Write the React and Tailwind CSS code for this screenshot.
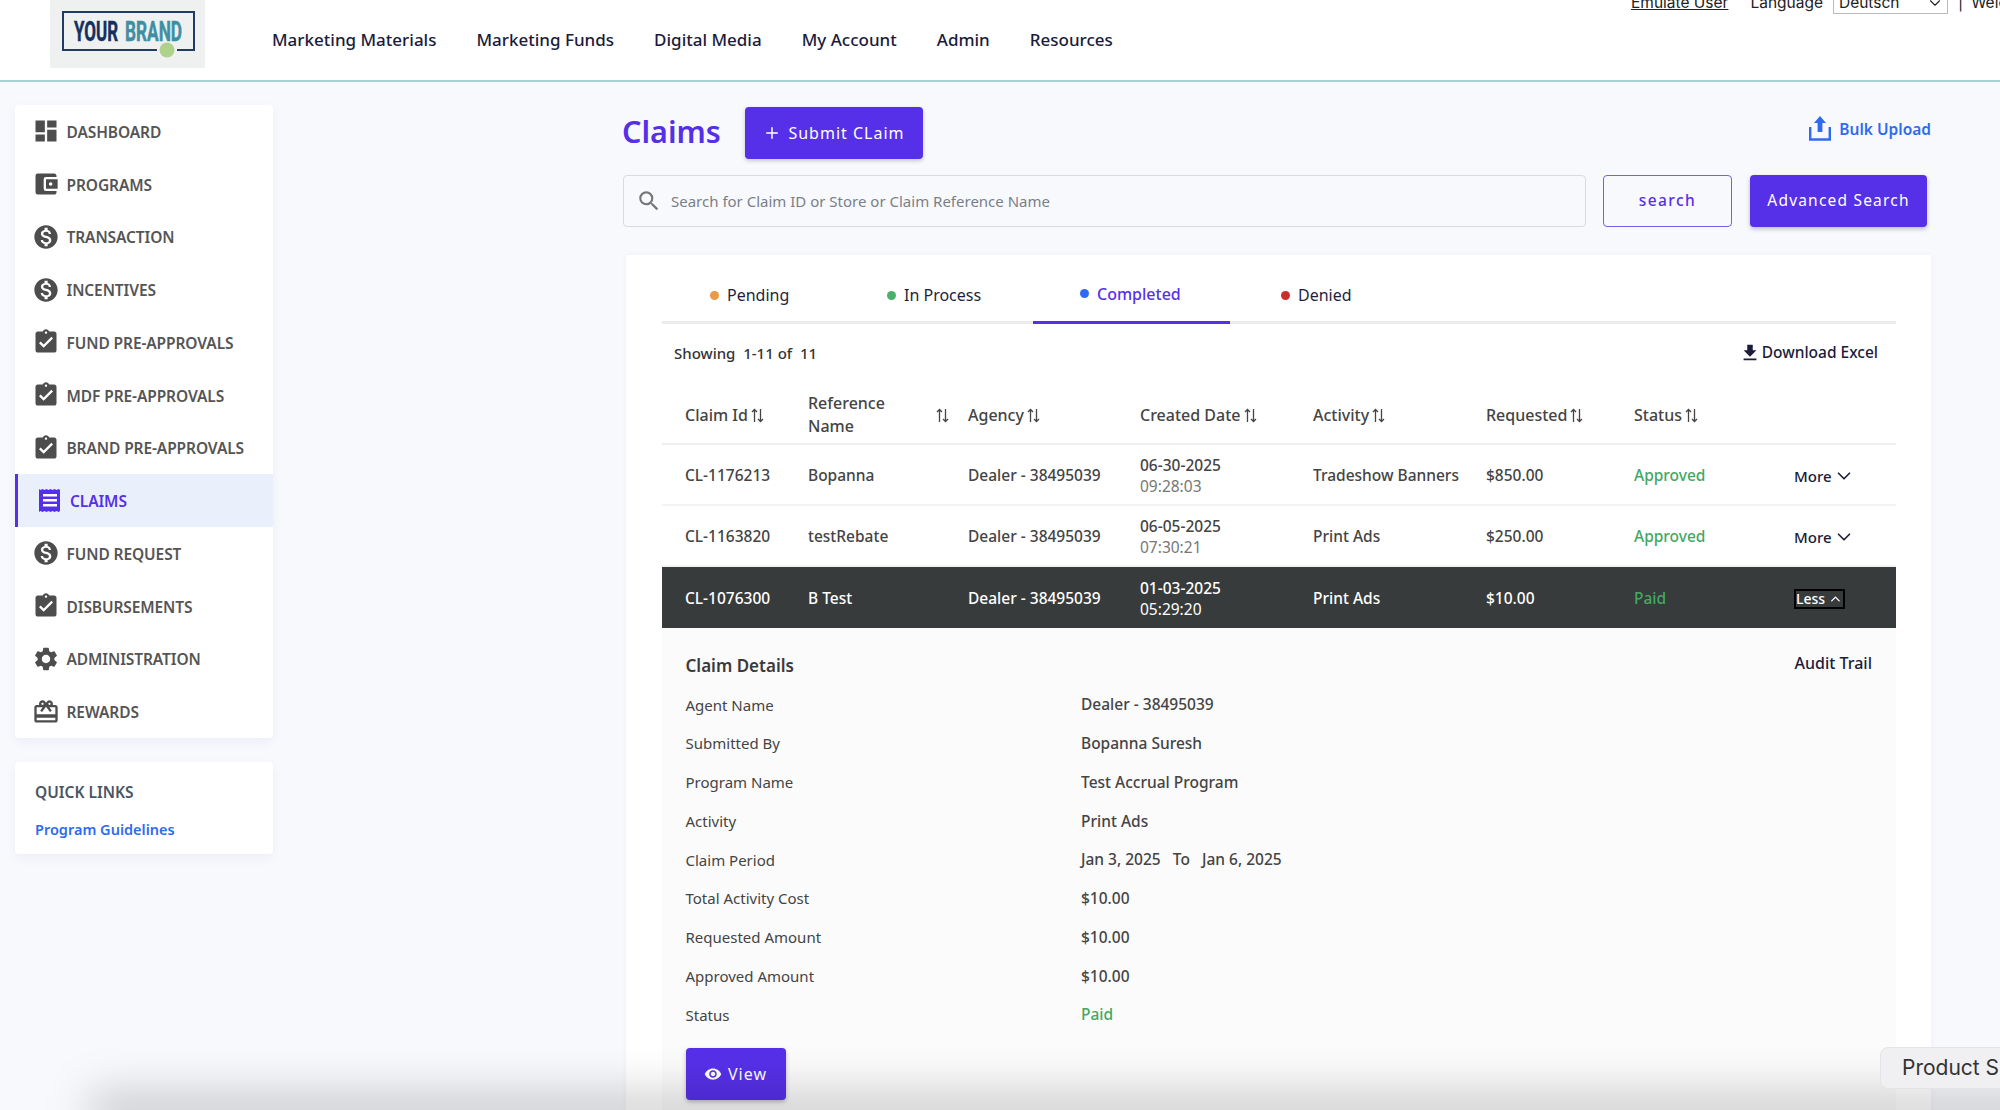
import React from "react";
import { ChevronDown, ChevronUp, Plus } from "lucide-react";
import {
  MdDashboard, MdAccountBalanceWallet, MdMonetizationOn, MdAssignmentTurnedIn,
  MdSettings, MdCardGiftcard, MdFileDownload, MdSearch, MdVisibility
} from "react-icons/md";

const navLinks = ["Marketing Materials", "Marketing Funds", "Digital Media", "My Account", "Admin", "Resources"];

const ClaimsIcon = () => (
  <svg width="22" height="23" viewBox="0 0 22 23" fill="#5630e8">
    <path d="M0 0l1.5 1 2-1 2 1 2-1 2 1 2-1 2 1 2-1 2 1 2-1 1.5 1v21l-1.5 1-2-1-2 1-2-1-2 1-2-1-2 1-2-1-2 1-2-1-1.5 1z" />
    <path d="M4 5h14v2.6H4zM4 10h14v2.6H4zM4 15h14v2.6H4z" fill="#fff" />
  </svg>
);

const sideItems = [
  { label: "DASHBOARD", Icon: MdDashboard },
  { label: "PROGRAMS", Icon: MdAccountBalanceWallet },
  { label: "TRANSACTION", Icon: MdMonetizationOn },
  { label: "INCENTIVES", Icon: MdMonetizationOn },
  { label: "FUND PRE-APPROVALS", Icon: MdAssignmentTurnedIn },
  { label: "MDF PRE-APPROVALS", Icon: MdAssignmentTurnedIn },
  { label: "BRAND PRE-APPROVALS", Icon: MdAssignmentTurnedIn },
  { label: "CLAIMS", active: true },
  { label: "FUND REQUEST", Icon: MdMonetizationOn },
  { label: "DISBURSEMENTS", Icon: MdAssignmentTurnedIn },
  { label: "ADMINISTRATION", Icon: MdSettings },
  { label: "REWARDS", Icon: MdCardGiftcard },
];

const tabs = [
  { label: "Pending", dot: "bg-[#e89a45]", cls: "w-[191px] pl-[48px]" },
  { label: "In Process", dot: "bg-[#4caf6a]", cls: "w-[180px] pl-[34px]" },
  { label: "Completed", dot: "bg-[#2f6bf0]", cls: "w-[197px] pl-[47px]", active: true },
  { label: "Denied", dot: "bg-[#c9302c]", cls: "pl-[51px]" },
];

const rows = [
  { id: "CL-1176213", ref: "Bopanna", date: "06-30-2025", time: "09:28:03", activity: "Tradeshow Banners", amount: "$850.00", status: "Approved" },
  { id: "CL-1163820", ref: "testRebate", date: "06-05-2025", time: "07:30:21", activity: "Print Ads", amount: "$250.00", status: "Approved" },
  { id: "CL-1076300", ref: "B Test", date: "01-03-2025", time: "05:29:20", activity: "Print Ads", amount: "$10.00", status: "Paid", open: true },
];

const details = [
  ["Agent Name", "Dealer - 38495039"],
  ["Submitted By", "Bopanna Suresh"],
  ["Program Name", "Test Accrual Program"],
  ["Activity", "Print Ads"],
  ["Claim Period", "Jan 3, 2025   To   Jan 6, 2025"],
  ["Total Activity Cost", "$10.00"],
  ["Requested Amount", "$10.00"],
  ["Approved Amount", "$10.00"],
  ["Status", "Paid"],
];

const SortIcon = () => (
  <svg width="13" height="15" viewBox="0 0 13 15" fill="none" stroke="#444" strokeWidth="1.3" className="shrink-0">
    <path d="M3.5 14V1.5M1 4l2.5-2.5L6 4M9.5 1v12.5M7 11l2.5 2.5L12 11" />
  </svg>
);

const Logo = () => (
  <div className="w-[155px] h-[68px] bg-[#eff1f1] shrink-0 self-start">
    <svg width="155" height="68" viewBox="0 0 155 68">
      <path d="M107 50H13V12h131v38h-17" fill="none" stroke="#1f3b66" strokeWidth="2" />
      <text x="24" y="41" fontFamily="Roboto" fontWeight="700" fontSize="27" fill="#16305e" stroke="#16305e" strokeWidth="0.5" textLength="44" lengthAdjust="spacingAndGlyphs">YOUR</text>
      <text x="75" y="41" fontFamily="Roboto" fontWeight="700" fontSize="27" fill="#3f8fa3" stroke="#3f8fa3" strokeWidth="0.5" textLength="57" lengthAdjust="spacingAndGlyphs">BRAND</text>
      <circle cx="117" cy="50" r="7.5" fill="#aed28a" />
    </svg>
  </div>
);

const columns = "grid grid-cols-[123px_160px_172px_173px_173px_148px_160px_1fr] pl-[23px] items-center";

export default function App() {
  return (
    <div className="relative w-[2000px] h-[1110px] overflow-hidden bg-[#f8f9fd] text-[#333] font-['Noto_Sans',sans-serif]">
      {/* top bar */}
      <header className="h-[82px] bg-white border-b-2 border-[#a9d0d0] flex items-start pl-[50px] whitespace-nowrap">
        <Logo />
        <nav className="flex-1 flex ml-[67px] mt-[27px] gap-[40px] text-[17px] leading-[26px] font-medium text-[#1b1b3a]">
          {navLinks.map(n => <a key={n}>{n}</a>)}
        </nav>
        <div className="-mt-[8px] flex items-center text-[#222] text-[15.5px] leading-[20px] font-['Inter',sans-serif] shrink-0 w-[369px]">
          <a className="underline shrink-0">Emulate User</a>
          <span className="ml-[22px] shrink-0">Language</span>
          <div className="ml-[10px] w-[115px] shrink-0 h-[22px] border border-[#bbb] flex items-center justify-between pl-[5px] pr-[3px]">
            Deutsch <ChevronDown size={18} strokeWidth={1.5} />
          </div>
          <span className="ml-[10px] shrink-0">|</span>
          <span className="ml-[8px] shrink-0">Welcome</span>
        </div>
      </header>

      <div className="flex">
        {/* left nav */}
        <aside className="w-[258px] ml-[15px] mt-[23px] shrink-0">
          <div className="bg-white rounded-[4px] shadow-[0_4px_12px_rgba(30,40,90,0.05)]">
            {sideItems.map(({ label, Icon, active }) => (
              <div key={label} className={`h-[52.75px] flex items-center ${active ? "bg-[#e9f0fb] border-l-[3px] border-[#5630e8] pl-[21px] text-[#5630e8]" : "pl-[17px] text-[#555]"}`}>
                {active ? <ClaimsIcon /> : <Icon size={28} color="#4d4d4d" />}
                <span className={`${active ? "ml-[9px]" : "ml-[6.5px]"} pt-[2px] text-[15.5px] font-semibold tracking-[-0.1px]`}>{label}</span>
              </div>
            ))}
          </div>
          <div className="bg-white rounded-[4px] mt-[24px] h-[92px] pl-[20px] pt-[18px] shadow-[0_4px_12px_rgba(30,40,90,0.05)]">
            <div className="text-[15.5px] leading-[24px] font-semibold text-[#4a5565]">QUICK LINKS</div>
            <a className="block mt-[13px] text-[14.5px] leading-[24px] font-semibold text-[#2f6bf0]">Program Guidelines</a>
          </div>
        </aside>

        <main className="ml-[350px] w-[1308px] shrink-0 pt-[25px]">
          <div className="flex items-center h-[52px]">
            <h1 className="text-[30.5px] font-semibold text-[#5630e8] w-[122px] pb-[2px] -ml-[1px] mr-[1px]">Claims</h1>
            <button className="h-[52px] w-[178px] rounded-[4px] bg-[#5630e8] text-white text-[16px] tracking-[1px] flex items-center justify-center gap-[7px] shadow-[0_2px_4px_rgba(0,0,0,0.2)]">
              <Plus size={18} strokeWidth={2} /> Submit CLaim
            </button>
            <a className="ml-auto -mt-[7px] flex items-center gap-[8px] text-[#2f6bf0] text-[15.5px] font-semibold">
              <svg width="22" height="25" viewBox="0 0 22 25" fill="none" className="-mt-[3px]">
                <path d="M11 0l6 7h-3.6v9H8.6V7H5z" fill="#2f6bf0" />
                <path d="M1.2 11v12.5h19.6V11" stroke="#2f6bf0" strokeWidth="2.4" />
              </svg>
              Bulk Upload
            </a>
          </div>

          <div className="flex mt-[16px] h-[52px] text-[15.5px]">
            <div className="w-[963px] border border-[#d9dbe0] rounded-[4px] flex items-center pl-[12px] text-[#7a7f87] text-[15px]">
              <MdSearch size={26} color="#777" />
              <span className="ml-[9px]">Search for Claim ID or Store or Claim Reference Name</span>
            </div>
            <button className="ml-[17px] w-[129px] border border-[#7b5cf0] rounded-[4px] text-[#5630e8] font-medium tracking-[1.4px]">search</button>
            <button className="ml-[18px] w-[177px] rounded-[4px] bg-[#5630e8] text-white tracking-[1.2px] shadow-[0_2px_4px_rgba(0,0,0,0.25)]">Advanced Search</button>
          </div>

          {/* claims panel */}
          <section className="ml-[3px] mt-[28px] w-[1305px] h-[860px] bg-white px-[36px] shadow-[0_0_6px_rgba(30,40,90,0.04)]">
            <div className="flex h-[69px] border-b-[3px] border-[#ececec] w-[1234px]">
              {tabs.map(t => (
                <div key={t.label} className={`${t.cls} h-[69px] pt-[11px] flex items-center gap-[8px] text-[16px] ${t.active ? "border-b-[3px] border-[#5630e8] text-[#5630e8] font-medium" : "text-[#1f1f3d]"}`}>
                  <span className={`w-[9px] h-[9px] rounded-full ${t.dot}`} />
                  {t.label}
                </div>
              ))}
            </div>

            <div className="flex justify-between items-center h-[58px] pl-[12px] pr-[18px] w-[1234px] text-[15px] font-medium">
              <span className="text-[#333]">Showing&nbsp; 1-11 of &nbsp;11</span>
              <a className="flex items-center gap-[1px] text-[15.5px] text-[#1b1b3a]">
                <MdFileDownload size={22} color="#1b1b3a" /> Download Excel
              </a>
            </div>

            <div className="w-[1234px]">
              <div className={`${columns} h-[63px] pt-[5px] border-b-[2px] border-[#f0f0f0] text-[16px] font-medium text-[#444]`}>
                <div className="flex items-center gap-[3px]">Claim Id <SortIcon /></div>
                <div className="flex items-center justify-between pr-[19px] leading-[23px]"><span>Reference<br />Name</span><SortIcon /></div>
                <div className="flex items-center gap-[3px]">Agency <SortIcon /></div>
                <div className="flex items-center gap-[3px]">Created Date <SortIcon /></div>
                <div className="flex items-center gap-[3px]">Activity <SortIcon /></div>
                <div className="flex items-center gap-[3px]">Requested <SortIcon /></div>
                <div className="flex items-center gap-[3px]">Status <SortIcon /></div>
                <div />
              </div>

              {rows.map(r => (
                <div key={r.id} className={`${columns} text-[15.5px] font-medium pt-[3px] ${r.open ? "h-[60.5px] bg-[#383b3b] text-white" : "h-[61px] border-b-[2px] border-[#f3f3f3] text-[#444]"}`}>
                  <div>{r.id}</div>
                  <div>{r.ref}</div>
                  <div>Dealer - 38495039</div>
                  <div className="leading-[21px]">
                    <div>{r.date}</div>
                    <div className={r.open ? "font-normal" : "font-normal text-[#777]"}>{r.time}</div>
                  </div>
                  <div>{r.activity}</div>
                  <div>{r.amount}</div>
                  <div className="text-[#43a862]">{r.status}</div>
                  {r.open ? (
                    <div className="w-[51px] h-[20px] border-2 border-black flex items-center justify-center gap-[3px] text-[14px] leading-none">
                      Less <ChevronUp size={18} strokeWidth={2.2} />
                    </div>
                  ) : (
                    <div className="flex items-center gap-[1px] text-[15px] text-[#1b1b3a]">
                      More <ChevronDown size={22} strokeWidth={1.8} />
                    </div>
                  )}
                </div>
              ))}

              {/* expanded row */}
              <div className="bg-[#fbfbfc] h-[500px] pl-[23.5px] pt-[21px]">
                <div className="flex justify-between items-center h-[32px] pr-[24px]">
                  <h3 className="text-[17px] font-semibold text-[#3a3a3a] mt-[2px]">Claim Details</h3>
                  <a className="text-[16px] font-medium text-[#1b1b3a] -mt-[3px]">Audit Trail</a>
                </div>
                <div className="mt-[5px]">
                  {details.map(([k, v]) => (
                    <div key={k} className="flex items-center h-[38.75px]">
                      <span className="w-[395.5px] text-[15px] text-[#444]">{k}</span>
                      <span className={`whitespace-pre text-[15.5px] font-medium ${k === "Status" ? "text-[#43a862]" : "text-[#444]"}`}>{v}</span>
                    </div>
                  ))}
                </div>
                <button className="mt-[14px] w-[100px] h-[52px] rounded-[4px] bg-[#5630e8] text-white text-[16px] tracking-[1px] flex items-center justify-center gap-[6px] shadow-[0_2px_4px_rgba(0,0,0,0.25)]">
                  <MdVisibility size={18} /> View
                </button>
              </div>
            </div>
          </section>
        </main>
      </div>

      {/* bottom fade and floating tab */}
      <div className="absolute left-[90px] -right-[60px] -bottom-[22px] h-[40px] bg-[#00000030] blur-[22px] pointer-events-none" />
      <div className="absolute left-[1880px] top-[1047px] w-[160px] h-[42px] bg-[#f0f0f2] border border-[#e4e4e6] rounded-[8px] pl-[21px] flex items-center text-[21px] text-[#333] font-['Inter',sans-serif] whitespace-nowrap">
        Product S
      </div>
    </div>
  );
}
